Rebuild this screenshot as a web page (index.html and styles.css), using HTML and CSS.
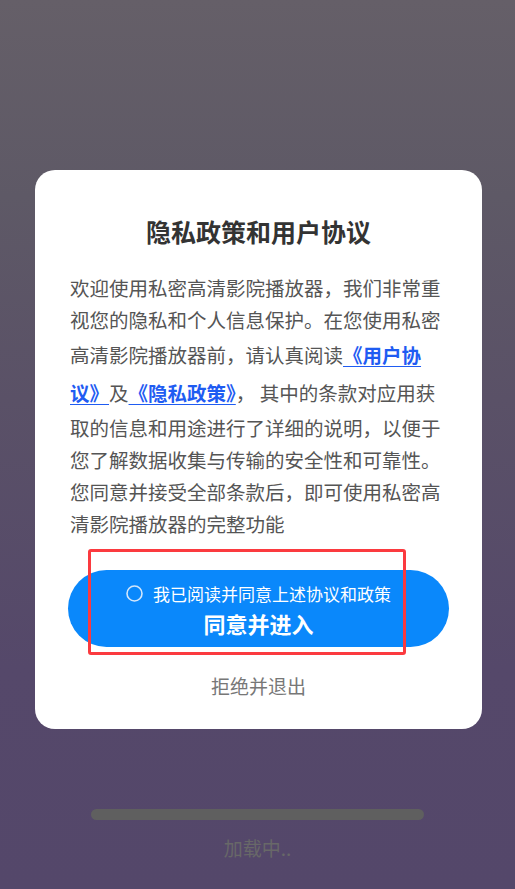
FILE: index.html
```html
<!DOCTYPE html>
<html lang="zh-CN">
<head>
<meta charset="utf-8">
<title>隐私政策和用户协议</title>
<link rel="stylesheet" href="styles.css">
</head>
<body>
<div class="screen">
  <div class="card">
    <h1 class="title">隐私政策和用户协议</h1>
    <p class="text">欢迎使用私密高清影院播放器，我们非常重视您的隐私和个人信息保护。在您使用私密高清影院播放器前，请认真阅读<a class="link">《用户协议》</a>及<a class="link">《隐私政策》</a>， 其中的条款对应用获取的信息和用途进行了详细的说明，以便于您了解数据收集与传输的安全性和可靠性。您同意并接受全部条款后，即可使用私密高清影院播放器的完整功能</p>
    <div class="btn-wrap">
      <button class="agree-btn">
        <span class="check-row">
          <svg class="radio" width="17" height="17" viewBox="0 0 17 17"><circle cx="8.5" cy="8.5" r="7.5" fill="none" stroke="#d2e6fb" stroke-width="1.6"/></svg>
          <span class="check-text">我已阅读并同意上述协议和政策</span>
        </span>
        <span class="agree-text">同意并进入</span>
      </button>
      <div class="highlight"></div>
    </div>
    <div class="reject">拒绝并退出</div>
  </div>
  <div class="loading">
    <div class="bar"></div>
    <div class="loading-text">加载中..</div>
  </div>
</div>
</body>
</html>
```
FILE: styles.css
```css
html, body {
  margin: 0;
  padding: 0;
}
body {
  width: 515px;
  height: 889px;
  overflow: hidden;
  font-family: "Noto Sans CJK SC", "Noto Sans", sans-serif;
  background: linear-gradient(180deg, #655f68 0%, #5e5966 22%, #5a5167 45%, #55486a 75%, #54476a 100%);
}
.screen {
  display: flex;
  flex-direction: column;
  padding-top: 170px;
}
.card {
  margin: 0 33px 0 35px;
  background: #fff;
  border-radius: 20px;
  padding: 45px 0 29px;
  display: flex;
  flex-direction: column;
  align-items: center;
}
.title {
  margin: 0;
  font-size: 25px;
  line-height: 32px;
  font-weight: 700;
  color: #333;
}
.text {
  margin: 25px 0 0;
  padding: 0 32px 0 35px;
  width: 100%;
  box-sizing: border-box;
  font-size: 19.5px;
  line-height: 32px;
  color: #555;
}
.link {
  color: #1f5cf2;
  font-weight: 700;
  text-decoration: underline;
  text-underline-offset: 3px;
  line-height: 38px;
}
.btn-wrap {
  position: relative;
  margin-top: 30px;
}
.agree-btn {
  width: 381px;
  height: 77px;
  border: none;
  border-radius: 39px;
  background: #0a88fb;
  color: #fff;
  display: flex;
  flex-direction: column;
  align-items: center;
  justify-content: center;
  gap: 2px;
  padding: 2px 0 0;
  font-family: inherit;
}
.check-row {
  display: flex;
  align-items: center;
  gap: 10px;
  height: 24px;
}
.radio {
  display: block;
}
.check-text {
  font-size: 17px;
  line-height: 24px;
}
.agree-text {
  font-size: 22px;
  line-height: 30px;
  font-weight: 700;
}
.highlight {
  position: absolute;
  left: 20px;
  top: -21px;
  width: 312px;
  height: 100px;
  border: 3px solid #fb3a3f;
  border-radius: 3px;
}
.reject {
  margin-top: 25px;
  font-size: 19px;
  line-height: 28px;
  color: #777;
}
.loading {
  display: flex;
  flex-direction: column;
  align-items: center;
  margin-top: 80px;
}
.bar {
  width: 333px;
  height: 11px;
  border-radius: 6px;
  background: #5f5f5f;
}
.loading-text {
  margin-top: 14px;
  font-size: 19px;
  line-height: 28px;
  color: #686868;
}
```
